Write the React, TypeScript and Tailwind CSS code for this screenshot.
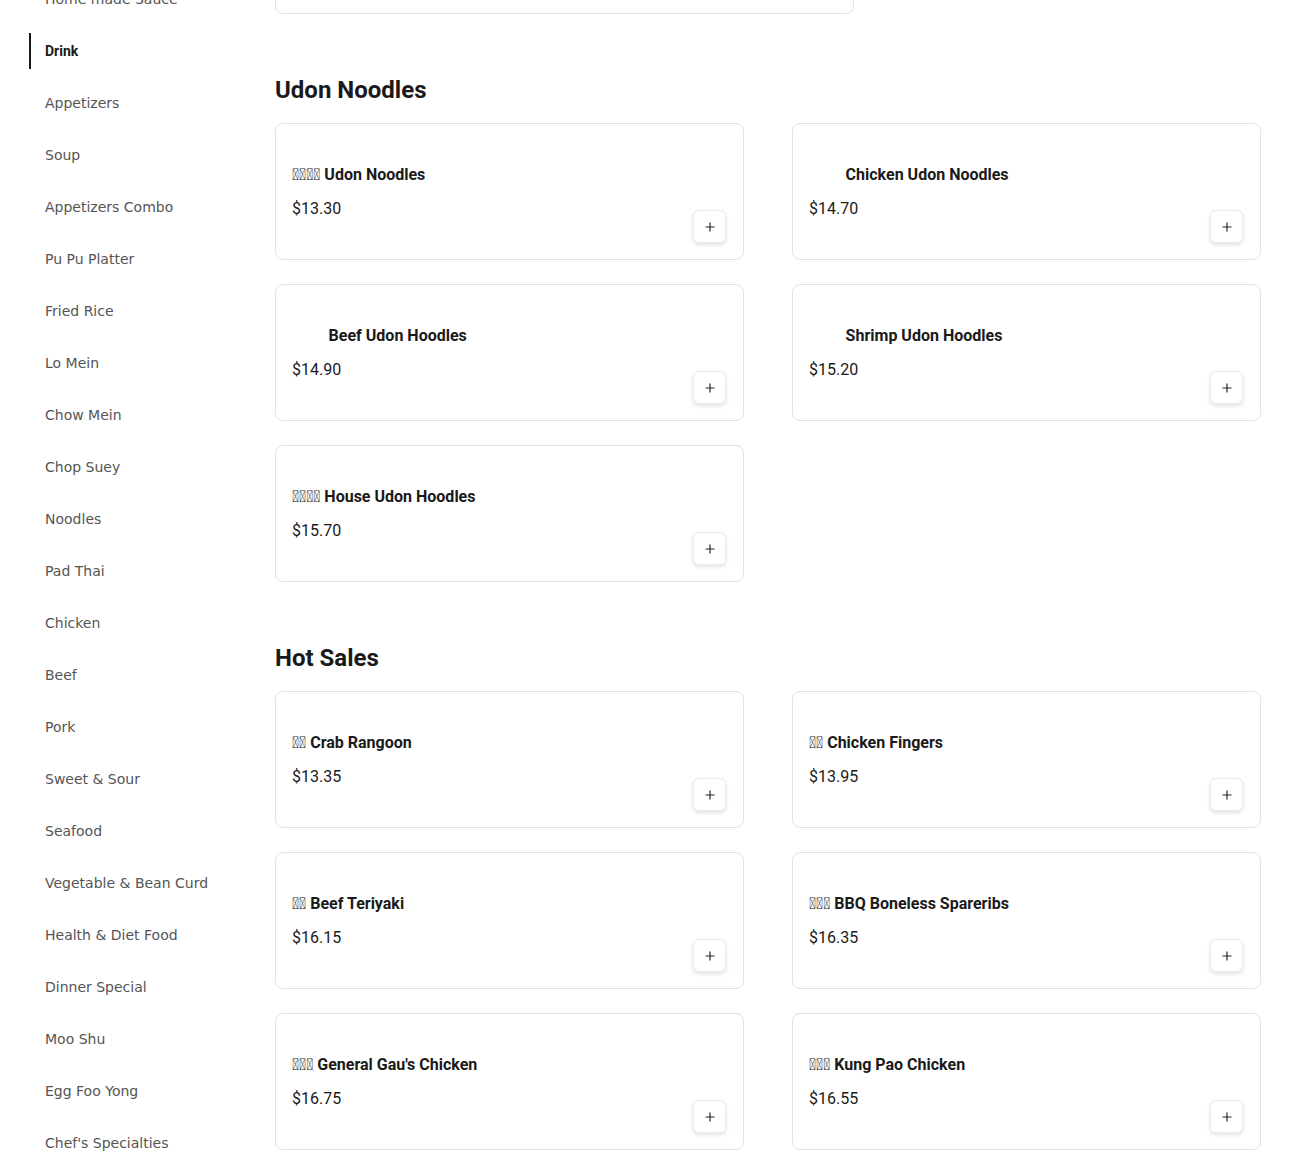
import { Plus } from 'lucide-react'

const CATEGORIES = [
  'Home made Sauce', 'Drink', 'Appetizers', 'Soup', 'Appetizers Combo', 'Pu Pu Platter',
  'Fried Rice', 'Lo Mein', 'Chow Mein', 'Chop Suey', 'Noodles', 'Pad Thai', 'Chicken',
  'Beef', 'Pork', 'Sweet & Sour', 'Seafood', 'Vegetable & Bean Curd', 'Health & Diet Food',
  'Dinner Special', 'Moo Shu', 'Egg Foo Yong', "Chef's Specialties",
]

interface Item { name: string; price: string }

// glyphs the fonts lack show up as boxes, as on the live page
const SECTIONS: { title: string; items: Item[] }[] = [
  {
    title: 'Udon Noodles',
    items: [
      { name: '\uE001\uE002\uE003\uE004 Udon Noodles', price: '$13.30' },
      { name: '\u2003\u2003 Chicken Udon Noodles', price: '$14.70' },
      { name: '\u2003\u2003 Beef Udon Hoodles', price: '$14.90' },
      { name: '\u2003\u2003 Shrimp Udon Hoodles', price: '$15.20' },
      { name: '\uE005\uE006\uE003\uE004 House Udon Hoodles', price: '$15.70' },
    ],
  },
  {
    title: 'Hot Sales',
    items: [
      { name: '\uE011\uE012 Crab Rangoon', price: '$13.35' },
      { name: '\uE013\uE014 Chicken Fingers', price: '$13.95' },
      { name: '\uE015\uE016 Beef Teriyaki', price: '$16.15' },
      { name: '\uE017\uE018\uE019 BBQ Boneless Spareribs', price: '$16.35' },
      { name: "\uE021\uE022\uE023 General Gau's Chicken", price: '$16.75' },
      { name: '\uE024\uE025\uE023 Kung Pao Chicken', price: '$16.55' },
    ],
  },
]

function Card({ item }: { item: Item }) {
  return (
    <div className="h-[137px] rounded-lg border border-[#e2e2e2] bg-white pl-4 pr-[17px] py-4 flex justify-between">
      <div className="pt-[23px]">
        <p className="text-base leading-6 font-bold text-[#1a1a1a] whitespace-pre">{item.name}</p>
        <p className="mt-[10px] text-base leading-6 text-[#1a1a1a]">{item.price}</p>
      </div>
      <button className="self-end w-[33px] h-[33px] flex items-center justify-center rounded-md border border-[#ececec] bg-white shadow-[0_2px_4px_rgba(0,0,0,0.12)]">
        <Plus className="h-3.5 w-3.5 text-[#222]" strokeWidth={2} />
      </button>
    </div>
  )
}

export default function App() {
  return (
    <div className="bg-white h-[1163px] overflow-hidden flex items-start">
      {/* Category sidebar */}
      <nav className="flex-none w-[275px] pl-[29px] mt-[-19px] flex flex-col gap-4 font-['DejaVu_Sans',sans-serif] text-sm">
        {CATEGORIES.map(c => (
          <div key={c}
            className={`flex-none h-9 flex items-center pl-[14px] border-l-2 ${
              c === 'Drink'
                ? "border-[#1a1a1a] font-bold text-[#1a1a1a] font-['Roboto',sans-serif]"
                : 'border-transparent text-[#555]'
            }`}>
            {c}
          </div>
        ))}
      </nav>

      {/* Menu */}
      <main className="flex-1 pr-[29px] font-['Roboto',sans-serif]">
        <div className="mt-[-100px] h-[114px] w-[579px] rounded-lg border border-[#e2e2e2]" />
        {SECTIONS.map(s => (
          <section key={s.title} className="mt-[60px]">
            <h2 className="text-2xl leading-8 font-bold text-[#1a1a1a] mb-[17px]">{s.title}</h2>
            <div className="grid grid-cols-2 gap-x-12 gap-y-6">
              {s.items.map(i => <Card key={i.name} item={i} />)}
            </div>
          </section>
        ))}
      </main>
    </div>
  )
}
